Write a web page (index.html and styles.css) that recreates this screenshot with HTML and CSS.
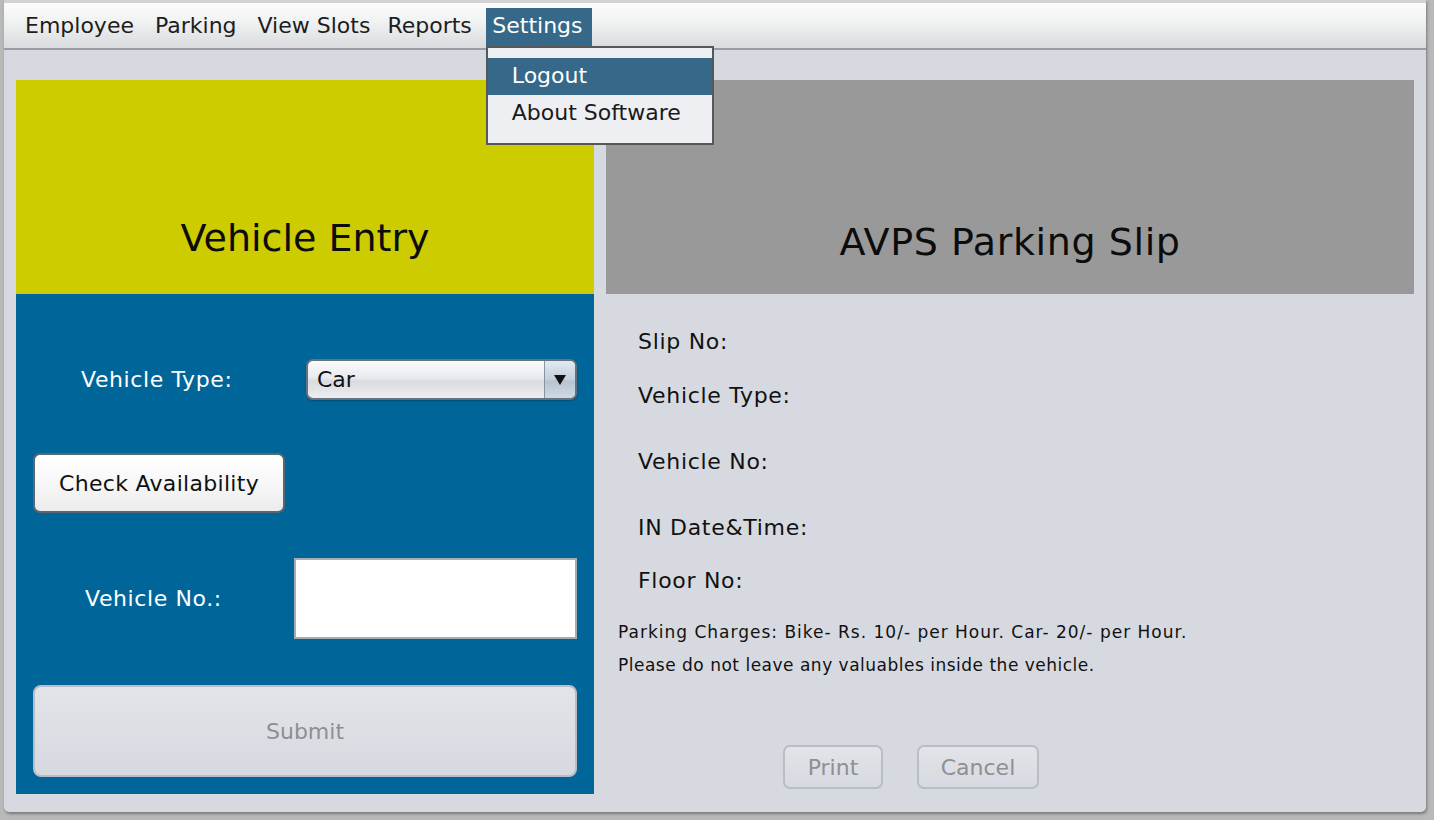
FILE: index.html
```html
<!DOCTYPE html>
<html>
<head>
<meta charset="utf-8">
<link rel="stylesheet" href="styles.css">
</head>
<body>
<div class="window">
  <div class="menubar">
    <div class="menu-item">Employee</div>
    <div class="menu-item">Parking</div>
    <div class="menu-item">View Slots</div>
    <div class="menu-item reports">Reports</div>
    <div class="menu-item active">Settings
      <div class="popup">
        <div class="popup-item selected">Logout</div>
        <div class="popup-item">About Software</div>
      </div>
    </div>
  </div>
  <div class="content">
    <div class="left">
      <div class="header yellow"><span>Vehicle Entry</span></div>
      <div class="entry">
        <div class="row row-type">
          <div class="label label-type">Vehicle Type:</div>
          <div class="combo">
            <div class="combo-text">Car</div>
            <div class="combo-arrow">
              <svg width="14" height="12" viewBox="0 0 14 12"><path d="M1 1 H13 L7 11 Z" fill="#111"/></svg>
            </div>
          </div>
        </div>
        <div class="btn check">Check Availability</div>
        <div class="row row-no">
          <div class="label label-no">Vehicle No.:</div>
          <div class="textfield"></div>
        </div>
        <div class="btn submit disabled">Submit</div>
      </div>
    </div>
    <div class="right">
      <div class="header gray"><span>AVPS Parking Slip</span></div>
      <div class="slip">
        <div class="slip-label s1">Slip No:</div>
        <div class="slip-label s2">Vehicle Type:</div>
        <div class="slip-label s3">Vehicle No:</div>
        <div class="slip-label s4">IN Date&amp;Time:</div>
        <div class="slip-label s5">Floor No:</div>
        <div class="note n1">Parking Charges: Bike- Rs. 10/- per Hour. Car- 20/- per Hour.</div>
        <div class="note n2">Please do not leave any valuables inside the vehicle.</div>
        <div class="actions">
          <div class="btn small disabled print">Print</div>
          <div class="btn small disabled cancel">Cancel</div>
        </div>
      </div>
    </div>
  </div>
</div>
</body>
</html>
```

FILE: styles.css
```css
html, body {
  margin: 0;
  padding: 0;
}
body {
  width: 1434px;
  height: 820px;
  overflow: hidden;
  background: #b9b9b9;
  font-family: "DejaVu Sans", "Liberation Sans", sans-serif;
  color: #111;
}
.window {
  position: relative;
  margin-left: 4px;
  width: 1422px;
  height: 809px;
  background: #d6d9e0;
  border-top: 3px solid #d2d2d2;
  border-radius: 0 0 5px 5px;
  box-shadow: 1px 2px 3px rgba(0,0,0,0.35);
}
.menubar {
  height: 45px;
  border-bottom: 2px solid #9a9ca5;
  background: linear-gradient(#fafbfa, #f1f2f2 40%, #dadbde);
  display: flex;
  padding-left: 10.5px;
  box-sizing: content-box;
}
.menu-item {
  position: relative;
  margin-top: 5px;
  height: 38px;
  line-height: 36px;
  padding: 0 10.5px;
  font-size: 22px;
  color: #1d1d1d;
}
.menu-item.reports {
  margin-left: -4px;
}
.menu-item.active {
  background: #366889;
  color: #fff;
  margin-left: 3.5px;
  padding: 0 9.5px 0 6.5px;
}
.popup {
  position: absolute;
  left: 0;
  top: 38px;
  width: 224px;
  height: 85px;
  padding-top: 10px;
  background: #eeeff3;
  border: 2px solid #575757;
  z-index: 5;
}
.popup-item {
  height: 37px;
  line-height: 36px;
  padding-left: 24px;
  color: #1a1a1a;
}
.popup-item.selected {
  background: #366889;
  color: #fff;
}
.content {
  display: flex;
  gap: 12px;
  padding: 30px 12px 0 12px;
}
.left {
  width: 578px;
}
.right {
  width: 808px;
}
.header {
  height: 214px;
  box-sizing: border-box;
  text-align: center;
  font-size: 38px;
  color: #0c0c0c;
}
.header.yellow {
  background: #cccc00;
  padding-top: 136px;
}
.header.gray {
  background: #999999;
  padding-top: 140px;
  letter-spacing: 0.6px;
}
.header span {
  display: inline-block;
  line-height: 44px;
}
.entry {
  background: #006699;
  height: 500px;
  box-sizing: border-box;
  padding: 65px 17px 0 17px;
  display: flex;
  flex-direction: column;
}
.row {
  display: flex;
  align-items: center;
}
.label {
  color: #fff;
  font-size: 22px;
  letter-spacing: 0.6px;
}
.label-type {
  margin-left: 48px;
  width: 225px;
}
.combo {
  width: 271px;
  height: 41px;
  box-sizing: border-box;
  border: 2px solid #66727e;
  border-radius: 7px;
  background: linear-gradient(#fbfbfc, #e9eaee 45%, #d9dbe0 55%, #eceef1);
  display: flex;
  overflow: hidden;
  box-shadow: 0 1px 2px rgba(0,0,0,0.25);
}
.combo-text {
  flex: 1;
  font-size: 22px;
  line-height: 37px;
  padding-left: 9px;
  color: #111;
}
.combo-arrow {
  width: 30px;
  border-left: 1px solid #8694a3;
  background: linear-gradient(#e3e9f0, #c3cfdc 50%, #b6c4d3 55%, #d0dae4);
  display: flex;
  align-items: center;
  justify-content: center;
}
.btn {
  box-sizing: border-box;
  display: flex;
  align-items: center;
  justify-content: center;
  font-size: 22px;
}
.check {
  margin-top: 53px;
  width: 252px;
  height: 60px;
  border: 2px solid #5c6672;
  border-radius: 7px;
  background: linear-gradient(#ffffff, #f7f7f7 50%, #ececec);
  color: #111;
  letter-spacing: 0.3px;
}
.row-no {
  margin-top: 45px;
  height: 81px;
}
.label-no {
  margin-left: 52px;
  width: 209px;
}
.textfield {
  width: 283px;
  height: 81px;
  box-sizing: border-box;
  background: #fff;
  border: 2px solid #a7adb5;
}
.submit {
  margin-top: 46px;
  width: 544px;
  height: 92px;
  border-radius: 8px;
}
.disabled {
  border: 2px solid #b9bdc5;
  background: linear-gradient(#e2e4e8, #d6d9e0);
  color: #8e8f92;
}
.slip {
  display: flex;
  flex-direction: column;
  padding-left: 32px;
}
.slip-label {
  height: 30px;
  line-height: 30px;
  font-size: 22px;
  color: #111;
  letter-spacing: 0.7px;
}
.s1 { margin-top: 33px; }
.s2 { margin-top: 24px; }
.s3 { margin-top: 36px; }
.s4 { margin-top: 36px; }
.s5 { margin-top: 23px; }
.note {
  margin-left: -20px;
  height: 33px;
  line-height: 33px;
  font-size: 17px;
  color: #111;
}
.n1 { margin-top: 20px; letter-spacing: 1px; }
.n2 { letter-spacing: 0.5px; }
.actions {
  display: flex;
  gap: 34px;
  margin-top: 63px;
  margin-left: 145px;
}
.small {
  height: 44px;
  border-radius: 7px;
}
.print { width: 100px; }
.cancel { width: 122px; }
```
